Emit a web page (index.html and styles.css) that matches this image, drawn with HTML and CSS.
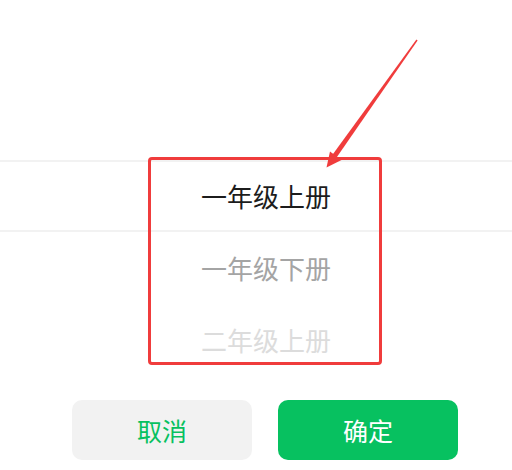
FILE: index.html
```html
<!DOCTYPE html>
<html lang="zh">
<head>
<meta charset="utf-8">
<link rel="stylesheet" href="styles.css">
</head>
<body>
<div class="page">
  <div class="picker">
    <div class="row row-selected">一年级上册</div>
    <div class="row row-near">一年级下册</div>
    <div class="row row-far">二年级上册</div>
  </div>
  <div class="actions">
    <button class="btn btn-cancel">取消</button>
    <button class="btn btn-ok">确定</button>
  </div>
  <div class="mark-box"></div>
  <svg class="mark-arrow" width="512" height="470" viewBox="0 0 512 470">
    <polygon fill="#f03c3c" points="417.6,40.4 416.4,39.6 331.2,156.6 335.2,159.4"/>
    <polygon fill="#f03c3c" points="326.5,167.5 341.5,160 330,151.5"/>
  </svg>
</div>
</body>
</html>
```
FILE: styles.css
```css
* { box-sizing: border-box; }
html, body { margin: 0; padding: 0; background: #ffffff; }
body {
  width: 512px;
  height: 470px;
  overflow: hidden;
  font-family: "Noto Sans CJK SC", "Noto Sans", sans-serif;
}
.page { position: relative; width: 512px; height: 470px; }
.picker { padding-top: 160px; }
.row {
  height: 72px;
  display: flex;
  align-items: center;
  justify-content: center;
  padding-left: 20px;
  font-size: 26px;
  line-height: 1;
}
.row-selected {
  color: #1c1c1c;
  border-top: 2px solid #f2f2f2;
  border-bottom: 2px solid #f2f2f2;
}
.row-near { color: #a4a4a4; }
.row-far { color: #dcdcdc; }
.actions {
  margin-top: 24px;
  display: flex;
  gap: 26px;
  padding-left: 72px;
}
.btn {
  width: 180px;
  height: 60px;
  border: none;
  border-radius: 10px;
  font-family: "Noto Sans CJK SC", "Noto Sans", sans-serif;
  font-size: 25px;
  font-weight: 400;
  padding: 0;
}
.btn-cancel { background: #f2f2f2; color: #07c160; }
.btn-ok { background: #07c160; color: #ffffff; }
.mark-box {
  position: absolute;
  left: 148px;
  top: 157px;
  width: 234px;
  height: 208px;
  border: 3.5px solid #f03c3c;
  border-radius: 4px;
}
.mark-arrow { position: absolute; left: 0; top: 0; pointer-events: none; }
```
